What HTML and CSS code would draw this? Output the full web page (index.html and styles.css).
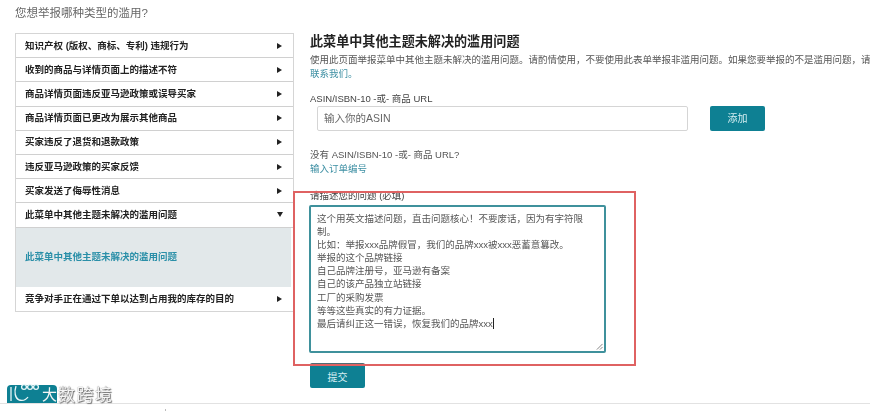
FILE: index.html
```html
<!DOCTYPE html>
<html lang="zh-CN">
<head>
  <meta charset="UTF-8" />
  <meta name="viewport" content="width=device-width, initial-scale=1.0"/>
  <title>举报滥用行为</title>
  <link rel="stylesheet" href="styles.css">
</head>
<body>

  <div class="page">
    <h1 class="page-title">您想举报哪种类型的滥用?</h1>

    <div class="columns">
      <!-- Menu -->
      <div class="menu">
        <div class="menu-row">知识产权 (版权、商标、专利) 违规行为<span class="arrow"></span></div>
        <div class="menu-row">收到的商品与详情页面上的描述不符<span class="arrow"></span></div>
        <div class="menu-row">商品详情页面违反亚马逊政策或误导买家<span class="arrow"></span></div>
        <div class="menu-row">商品详情页面已更改为展示其他商品<span class="arrow"></span></div>
        <div class="menu-row">买家违反了退货和退款政策<span class="arrow"></span></div>
        <div class="menu-row">违反亚马逊政策的买家反馈<span class="arrow"></span></div>
        <div class="menu-row">买家发送了侮辱性消息<span class="arrow"></span></div>
        <div class="menu-row">此菜单中其他主题未解决的滥用问题<span class="arrow-down"></span></div>
        <div class="menu-panel">此菜单中其他主题未解决的滥用问题</div>
        <div class="menu-row">竞争对手正在通过下单以达到占用我的库存的目的<span class="arrow"></span></div>
      </div>

      <!-- Form -->
      <form class="report-form">
        <h2 class="form-title">此菜单中其他主题未解决的滥用问题</h2>
        <p class="form-desc">使用此页面举报菜单中其他主题未解决的滥用问题。请酌情使用&#xFF0C;不要使用此表单举报非滥用问题。如果您要举报的不是滥用问题&#xFF0C;请<br><a href="#contact">联系我们。</a></p>

        <label class="field-label">ASIN/ISBN-10 -或- 商品 URL</label>
        <div class="asin-row">
          <input class="asin-input" type="text" placeholder="输入你的ASIN" />
          <button class="btn" type="button">添加</button>
        </div>

        <p class="no-asin">没有 ASIN/ISBN-10 -或- 商品 URL?<br><a href="#order">输入订单编号</a></p>

        <label class="field-label">请描述您的问题 (必填)</label>
        <div class="text-box">这个用英文描述问题&#xFF0C;直击问题核心&#xFF01;不要废话&#xFF0C;因为有字符限制。
比如&#xFF1A;举报xxx品牌假冒&#xFF0C;我们的品牌xxx被xxx恶蓄意篡改。
举报的这个品牌链接
自己品牌注册号&#xFF0C;亚马逊有备案
自己的该产品独立站链接
工厂的采购发票
等等这些真实的有力证据。
最后请纠正这一错误&#xFF0C;恢复我们的品牌xxx<span class="caret"></span><svg class="grip" viewBox="0 0 8 8"><path d="M1 7.5 7.5 1M4.5 7.5 7.5 4.5" /></svg></div>

        <button class="btn btn-submit" type="submit">提交</button>
      </form>
    </div>

    <div class="footer"><span class="tick"></span></div>
  </div>

  <!-- Red annotation over the form -->
  <div class="mark-box"></div>

  <!-- Watermark -->
  <div class="watermark">
    <div class="wm-badge">
      <svg class="wm-icon" viewBox="0 0 34 20">
        <path d="M4 4v14M9 3c-2 6-1 12 3 14 4 1 7 0 9-3" />
        <circle cx="17" cy="4" r="2.4" />
        <circle cx="23" cy="4" r="2.4" />
        <circle cx="29" cy="4" r="2.4" />
      </svg>
      <span class="wm-first">大</span>
    </div>
    <span class="wm-text">数跨境</span>
  </div>

</body>
</html>
```

FILE: styles.css
```css
html, body {
  margin: 0;
  height: 411px;
  overflow: hidden;
  background: #ffffff;
}

body {
  font-family: "Liberation Sans", "Noto Sans CJK SC", sans-serif;
  font-size: 9.5px;
  color: #444;
  position: relative;
}

.page {
  width: 870px;
  filter: blur(0.35px);
}

.page-title {
  margin: 0;
  padding: 5px 0 0 15px;
  height: 33px;
  box-sizing: border-box;
  font-size: 11.5px;
  line-height: 17px;
  font-weight: normal;
  color: #666;
}

.columns {
  display: flex;
  height: 370px;
}

/* left menu */
.menu {
  width: 279px;
  margin-left: 15px;
  align-self: flex-start;
  border: 1px solid #d5d5d5;
  box-sizing: border-box;
}

.menu-row {
  height: 24.2px;
  box-sizing: border-box;
  display: flex;
  align-items: center;
  justify-content: space-between;
  padding: 0 11px 2px 9px;
  border-bottom: 1px solid #d0d0d0;
  font-weight: bold;
  color: #222;
}

.menu-row:last-child {
  border-bottom: none;
}

.arrow {
  width: 0;
  height: 0;
  margin-top: 2px;
  border-left: 5px solid #222;
  border-top: 3px solid transparent;
  border-bottom: 3px solid transparent;
}

.arrow-down {
  width: 0;
  height: 0;
  margin: 2px -1px 0 0;
  border-top: 5px solid #222;
  border-left: 3px solid transparent;
  border-right: 3px solid transparent;
}

.menu-panel {
  height: 59.5px;
  margin-right: 2px;
  padding: 0 0 2px 9px;
  box-sizing: border-box;
  display: flex;
  align-items: center;
  background: #e2e8ea;
  color: #2a8fa8;
  font-weight: bold;
}

/* right form */
.report-form {
  margin-left: 16px;
  flex: 1;
  min-width: 0;
}

.form-title {
  margin: 0;
  padding-top: 1px;
  font-size: 13.1px;
  line-height: 16px;
  color: #222;
}

.form-desc {
  margin: 3px 0 0;
  line-height: 14px;
  white-space: nowrap;
  color: #555;
}

a {
  color: #3d8fa3;
  text-decoration: none;
}

.field-label {
  display: block;
  line-height: 13px;
  font-size: 9.5px;
  color: #444;
}

.form-desc + .field-label {
  margin-top: 11px;
}

.asin-row {
  display: flex;
  align-items: center;
  gap: 22px;
  margin: 0.5px 0 0 7px;
}

.asin-input {
  width: 371px;
  height: 25px;
  box-sizing: border-box;
  padding: 0 6px;
  border: 1px solid #d5d5d5;
  border-radius: 2px;
  font: inherit;
  font-size: 10.5px;
}

.asin-input::placeholder {
  color: #666;
}

.btn {
  width: 55px;
  height: 25px;
  padding: 0 0 2px;
  border: none;
  border-radius: 2px;
  background: #0e8093;
  color: #d5eef2;
  font: inherit;
  font-size: 10px;
}

.no-asin {
  margin: 17.5px 0 0;
  line-height: 13.5px;
  font-size: 9.5px;
  color: #555;
}

.no-asin + .field-label {
  margin-top: 14px;
}

.text-box {
  position: relative;
  width: 297px;
  height: 148px;
  margin: 3px 0 0 -1px;
  box-sizing: border-box;
  padding: 5px 6px;
  border: 2px solid #3f919c;
  border-radius: 2px;
  line-height: 13.1px;
  white-space: pre-wrap;
  color: #555;
}

.caret {
  display: inline-block;
  width: 1px;
  height: 11px;
  vertical-align: -2px;
  background: #222;
}

.grip {
  position: absolute;
  right: 1px;
  bottom: 1px;
  width: 7px;
  height: 7px;
  fill: none;
  stroke: #777;
  stroke-width: 1;
}

.btn-submit {
  display: block;
  position: relative;
  z-index: 2;
  margin: 10px 0 0;
  border-top: 3px solid #4f6c74;
}

.footer {
  position: relative;
  height: 8px;
  border-top: 1px solid #e2e2e2;
}

.tick {
  position: absolute;
  left: 165px;
  top: 5px;
  width: 1px;
  height: 3px;
  background: #bbb;
}

/* overlays */
.mark-box {
  position: absolute;
  left: 293px;
  top: 191px;
  width: 343px;
  height: 175px;
  box-sizing: border-box;
  border: 2px solid #df6262;
}

.watermark {
  position: absolute;
  left: 7px;
  top: 385px;
  display: flex;
  align-items: center;
  height: 18px;
}

.wm-badge {
  display: flex;
  align-items: center;
  justify-content: flex-end;
  width: 50px;
  height: 18px;
  box-sizing: border-box;
  border-radius: 4px 4px 0 0;
  background: #0e8093;
  position: relative;
}

.wm-icon {
  position: absolute;
  left: 0;
  top: -2px;
  width: 34px;
  height: 20px;
  fill: none;
  stroke: #e8f6f8;
  stroke-width: 1.3;
}

.wm-first,
.wm-text {
  font-family: "Noto Sans CJK SC", sans-serif;
  font-size: 15px;
  line-height: 18px;
  color: #f4f4f4;
  text-shadow: 0 0 1px #555, 1px 1px 1px #777;
}

.wm-first {
  text-shadow: none;
}

.wm-text {
  margin-left: 1px;
  font-size: 17px;
  letter-spacing: 1.5px;
}
```
